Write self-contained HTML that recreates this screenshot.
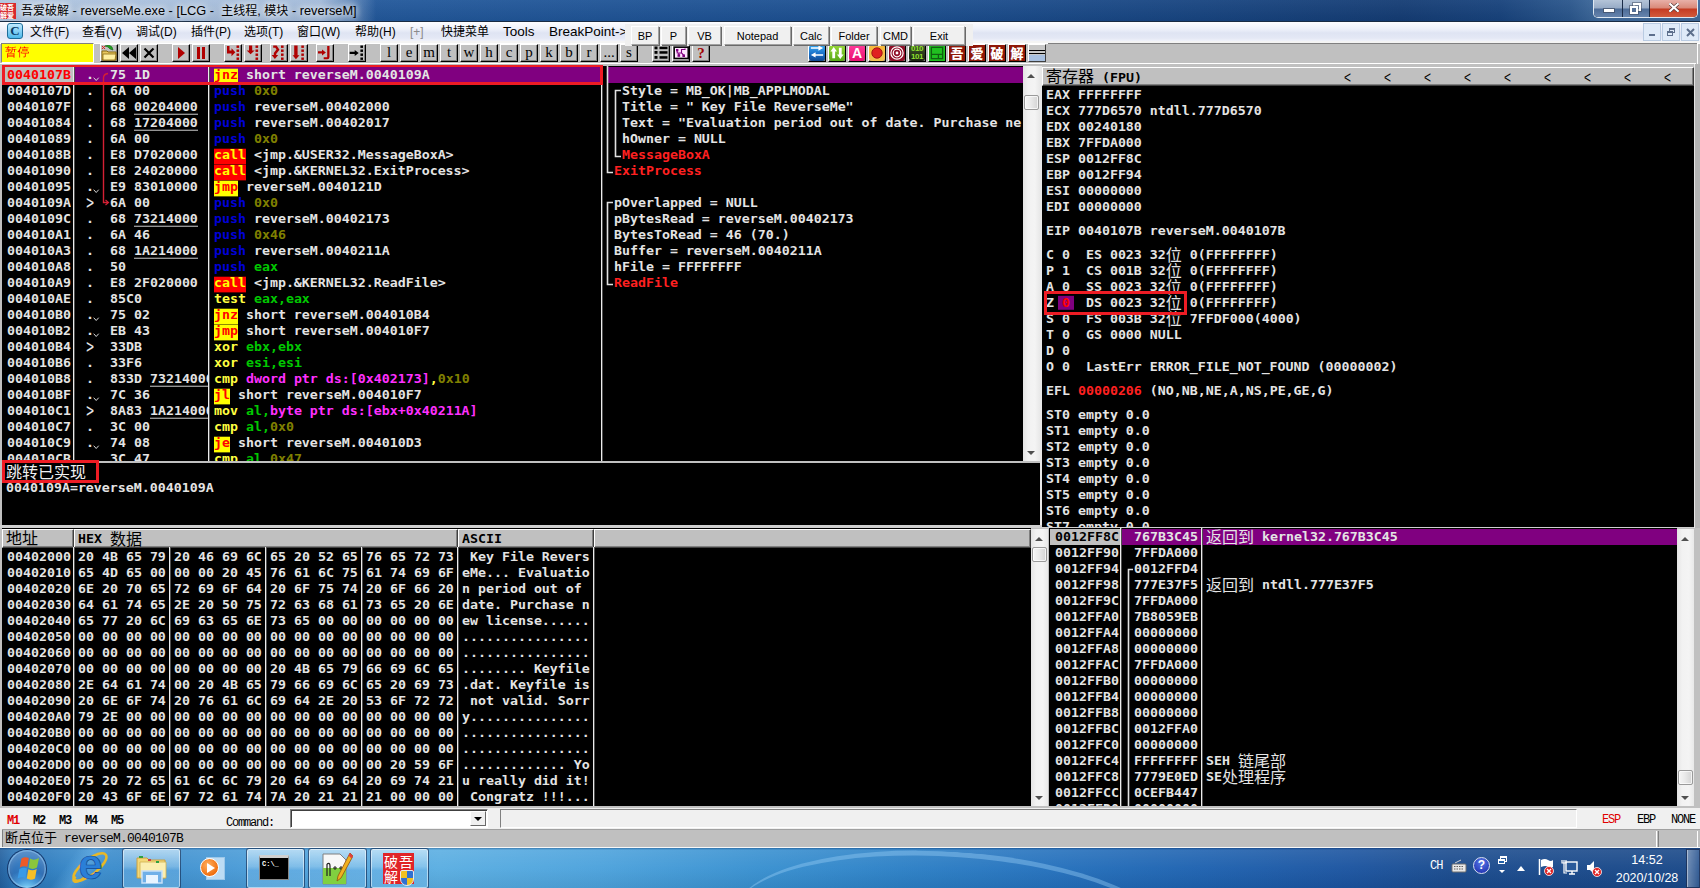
<!DOCTYPE html><html><head><meta charset="utf-8"><title>OllyDbg</title><style>
*{box-sizing:border-box;margin:0;padding:0}
html,body{width:1700px;height:888px;overflow:hidden;background:#c0c0c0}
body{position:relative;font-family:"Liberation Sans","Noto Sans CJK SC",sans-serif;font-size:13px;color:#000}
.abs{position:absolute}
.m{position:absolute;margin-top:1px;white-space:pre;font-family:"DejaVu Sans Mono","Liberation Mono","WenQuanYi Zen Hei","Noto Sans CJK SC",monospace;font-weight:bold;font-size:13.288px;line-height:18px;height:16px;color:#e4e4e4;letter-spacing:0;transform:scaleY(.87);transform-origin:0 6.500px}
.m i{font-style:normal}
.cj{font-family:"Noto Sans CJK SC","WenQuanYi Zen Hei",sans-serif;font-weight:normal;font-size:16px;letter-spacing:0}
.m .cj{position:relative;top:-1.500px;display:inline-block;height:16px;line-height:16px;vertical-align:top;transform:scaleY(1.150);transform-origin:0 6.500px}
.m.cj{transform:none;line-height:13px}
.pane{position:absolute;background:#000;overflow:hidden}
.pu{color:#0000d8}.ol{color:#808000}.gr{color:#00c800}.ye{color:#ffff40}.mg{color:#ff30ff}.rd{color:#ff2020}
.cl{color:#ffff00;background:#ff0000;padding:.200px 0 2.800px}.jp{color:#ff0000;background:#ffff00;padding:.200px 0 2.800px}
.u{border-bottom:1px solid #e8e8e8}
.vl{position:absolute;width:1px;background:#d8d8d8}
.tb{position:absolute;top:44px;width:18px;height:18px;background:#c0c0c0;border:1px solid;border-color:#fff #000 #000 #fff;box-shadow:inset -1px -1px 0 #808080}
.tbl{font-family:"Liberation Serif",serif;font-size:15px;line-height:15px;text-align:center;color:#000}
.fb{position:absolute;z-index:6;top:26px;height:19px;background:#f0f0f0;border:1px solid;border-color:#fff #a0a0a0 #a0a0a0 #fff;box-shadow:1px 1px 0 #696969;font-size:11px;line-height:18px;text-align:center;color:#000}
.mi{position:absolute;top:23px;height:18px;line-height:18px;font-size:12px;color:#000;white-space:pre}
.sb{position:absolute;background:linear-gradient(90deg,#e4e4e4 0,#f2f2f2 30%,#f4f4f4 70%,#e8e8e8 100%)}
.sbb{position:absolute;background:linear-gradient(90deg,#f6f6f6 0,#eaeaea 45%,#d4d4d4 100%);border:1px solid #9a9a9a;border-radius:2px;box-shadow:inset 0 0 0 1px rgba(255,255,255,.7)}
.hd{position:absolute;background:#c0c0c0;height:18px;border:1px solid;border-color:#fff #404040 #404040 #fff;box-shadow:inset -1px -1px 0 #808080}
</style></head><body>
<div class="abs" style="left:0;top:0;width:1700px;height:22px;background:linear-gradient(90deg,#275c9d 0,#21579a 420px,#1c4f90 900px,#174480 1200px,#143c74 1400px,#17427c 1500px,#2a568c 1570px,#3f6a9c 1600px);border-bottom:1px solid #1a2c44"></div>
<div class="abs" style="left:0;top:0;width:400px;height:21px;background:linear-gradient(90deg,rgba(190,208,230,.9) 0,rgba(180,200,226,.88) 320px,rgba(170,192,222,.5) 350px,rgba(170,192,222,0) 376px)"></div>
<div class="abs" style="left:0;top:0;width:1700px;height:21px;background:linear-gradient(180deg,rgba(255,255,255,.05),rgba(0,0,0,.05))"></div>
<div class="abs" style="left:0;top:3px;width:16px;height:16px;background:#d8282c;color:#fff;font-size:7px;line-height:8px;font-weight:bold;overflow:hidden;letter-spacing:0;font-family:'Noto Sans CJK SC',sans-serif">破吾<br>解爱</div>
<div class="abs" style="left:21px;top:1px;height:20px;line-height:20px;font-size:12.800px;color:#000;white-space:pre;text-shadow:0 0 6px #fff,0 0 8px #fff"><span style="font-size:12px">吾爱破解</span> - reverseMe.exe - [LCG -  <span style="font-size:12px">主线程</span>, <span style="font-size:12px">模块</span> - reverseM]</div>
<div class="abs" style="left:1593px;top:0;width:105px;height:18px;border:1px solid #dfe8f2;border-top:none;border-radius:0 0 5px 5px;background:#1b2c48"></div>
<div class="abs" style="left:1594px;top:0;width:28px;height:17px;border-radius:0 0 0 4px;background:linear-gradient(180deg,#b4c4d8 0,#97abc6 48%,#4d6c97 52%,#6684ad 100%)"><div class="abs" style="left:10px;top:9px;width:10px;height:3px;background:#fff;box-shadow:0 0 0 1px rgba(60,70,90,.6)"></div></div>
<div class="abs" style="left:1623px;top:0;width:26px;height:17px;background:linear-gradient(180deg,#b4c4d8 0,#97abc6 48%,#4d6c97 52%,#6684ad 100%)"><div class="abs" style="left:10px;top:3px;width:8px;height:8px;border:2px solid #fff;box-shadow:0 0 0 1px rgba(60,70,90,.5)"></div><div class="abs" style="left:7px;top:6px;width:8px;height:8px;border:2px solid #fff;background:#546f96;box-shadow:0 0 0 1px rgba(60,70,90,.5)"></div></div>
<div class="abs" style="left:1650px;top:0;width:47px;height:17px;border-radius:0 0 4px 0;background:linear-gradient(180deg,#e8b0a8 0,#d98878 48%,#c43a22 52%,#d25a3c 100%)"><svg class="abs" style="left:19px;top:3px" width="10" height="9" viewBox="0 0 13 11"><path d="M1.5 1 L11.5 10 M11.5 1 L1.5 10" stroke="#4a3030" stroke-width="4.4" stroke-linecap="square"/><path d="M1.5 1 L11.5 10 M11.5 1 L1.5 10" stroke="#fff" stroke-width="2.8" stroke-linecap="square"/></svg></div>
<div class="abs" style="left:0;top:22px;width:1700px;height:20px;background:linear-gradient(180deg,#fdfdff 0,#eef1fa 35%,#dfe4f3 55%,#e4e8f5 80%,#f4f6fc 100%)"></div>
<div class="abs" style="left:0;top:41px;width:1700px;height:2px;background:#f4f4f4"></div>
<div class="abs" style="left:7px;top:23px;width:16px;height:16px;border-radius:3px;border:1px solid #1c6c98;background:linear-gradient(180deg,#bfeaff,#4cb8ea);color:#0a3c66;font-family:'Liberation Serif',serif;font-weight:bold;font-size:13px;line-height:14px;text-align:center">C</div>
<div class="mi" style="left:30px">文件(F)</div>
<div class="mi" style="left:82px">查看(V)</div>
<div class="mi" style="left:136px">调试(D)</div>
<div class="mi" style="left:191px">插件(P)</div>
<div class="mi" style="left:244px">选项(T)</div>
<div class="mi" style="left:297px">窗口(W)</div>
<div class="mi" style="left:355px">帮助(H)</div>
<div class="mi" style="left:410px;color:#8a8a8a">[+]</div>
<div class="mi" style="left:441px">快捷菜单</div>
<div class="mi" style="left:503px;font-size:13.5px">Tools</div>
<div class="mi" style="left:549px;font-size:13.5px">BreakPoint-&gt;</div>
<div class="abs" style="left:1643px;top:23px;width:18px;height:18px;background:#dfeaf8;border:1px solid #b9cbe2"><div class="abs" style="left:5px;top:10px;width:6px;height:2px;background:#5d6f8c"></div></div>
<div class="abs" style="left:1662px;top:23px;width:18px;height:18px;background:#dfeaf8;border:1px solid #b9cbe2"><div class="abs" style="left:6px;top:4px;width:6px;height:5px;border:1px solid #5d6f8c;border-top-width:2px"></div><div class="abs" style="left:4px;top:7px;width:6px;height:5px;border:1px solid #5d6f8c;border-top-width:2px;background:#dfeaf8"></div></div>
<div class="abs" style="left:1681px;top:23px;width:18px;height:18px;background:#dfeaf8;border:1px solid #b9cbe2"><svg class="abs" style="left:4px;top:4px" width="9" height="9" viewBox="0 0 9 9"><path d="M1 1L8 8M8 1L1 8" stroke="#5d6f8c" stroke-width="2"/></svg></div>
<div class="abs" style="left:625px;top:24px;width:348px;height:22px;background:#f0f0f0;z-index:5"></div>
<div class="fb" style="left:631px;width:28px">BP</div>
<div class="fb" style="left:661px;width:25px">P</div>
<div class="fb" style="left:688px;width:33px">VB</div>
<div class="fb" style="left:724px;width:67px">Notepad</div>
<div class="fb" style="left:793px;width:36px">Calc</div>
<div class="fb" style="left:831px;width:46px">Folder</div>
<div class="fb" style="left:880px;width:31px">CMD</div>
<div class="fb" style="left:913px;width:52px">Exit</div>
<div class="abs" style="left:0;top:43px;width:1700px;height:22px;background:#c0c0c0;border-top:1px solid #fff"></div>
<div class="abs" style="left:0;top:63px;width:1696px;height:1px;background:#fff"></div>
<div class="abs" style="left:1697px;top:43px;width:1px;height:21px;background:#fff"></div>
<div class="abs" style="left:1048px;top:43px;width:649px;height:1px;background:#808080"></div>
<div class="abs" style="left:1px;top:43px;width:93px;height:20px;background:#ffff00;border:1px solid;border-color:#808080 #fff #fff #808080;color:#ff0000;font-family:'WenQuanYi Zen Hei','Noto Sans CJK SC',sans-serif;font-size:12px;line-height:17px;padding-left:3px;letter-spacing:.5px">暂停</div>
<div class="tb " style="left:100px"><svg width="16" height="16" viewBox="0 0 16 16" style="position:absolute;left:0;top:0"><path d="M1 6h5l1 1h8v8H1z" fill="#e8c860" stroke="#8a6a10" stroke-width="1"/><path d="M2 9h13l-1 6H2z" fill="#fff0a0" stroke="#8a6a10" stroke-width=".8"/><path d="M4 1c2-1 5-1 7 1l1 3-3-1-2-2z" fill="#20a020" stroke="#106010" stroke-width=".6"/><path d="M1 1l3 3M4 1L1 4" stroke="#e02020" stroke-width="1"/></svg></div>
<div class="tb " style="left:120px"><svg width="16" height="16" viewBox="0 0 16 16" style="position:absolute;left:0;top:0"><path d="M8 2v12L1 8zM15 2v12L8 8z" fill="#000"/></svg></div>
<div class="tb " style="left:140px"><svg width="16" height="16" viewBox="0 0 16 16" style="position:absolute;left:0;top:0"><path d="M3.5 3.5l9 9M12.5 3.5l-9 9" stroke="#000" stroke-width="2.2"/></svg></div>
<div class="tb " style="left:172px"><svg width="16" height="16" viewBox="0 0 16 16" style="position:absolute;left:0;top:0"><path d="M5 2l7 6-7 6z" fill="#b00000"/></svg></div>
<div class="tb " style="left:192px"><svg width="16" height="16" viewBox="0 0 16 16" style="position:absolute;left:0;top:0"><path d="M4 2h3v12H4zM9 2h3v12H9z" fill="#b00000"/></svg></div>
<div class="tb " style="left:224px"><svg width="16" height="16" viewBox="0 0 16 16" style="position:absolute;left:0;top:0"><path d="M2 1h2.500v4.500h2V3.200l3.800 4-3.800 4V8.500H2z" fill="#b00000"/><rect x="11.5" y="0.5" width="2.600" height="2.400" fill="#b00000"/><rect x="11.5" y="4.5" width="2.600" height="2.400" fill="#b00000"/><rect x="11.5" y="8.5" width="2.600" height="2.400" fill="#b00000"/><rect x="11.5" y="12.5" width="2.600" height="2.400" fill="#b00000"/></svg></div>
<div class="tb " style="left:244px"><svg width="16" height="16" viewBox="0 0 16 16" style="position:absolute;left:0;top:0"><path d="M4 .500h3.200v5h2.400L5.600 9.300 1.700 5.500H4z" fill="#b00000"/><rect x="10.5" y="0.5" width="2.600" height="2.400" fill="#b00000"/><rect x="10.5" y="4.5" width="2.600" height="2.400" fill="#b00000"/><rect x="10.5" y="8.5" width="2.600" height="2.400" fill="#b00000"/><rect x="10.5" y="12.5" width="2.600" height="2.400" fill="#b00000"/></svg></div>
<div class="tb " style="left:270px"><svg width="16" height="16" viewBox="0 0 16 16" style="position:absolute;left:0;top:0"><path d="M2.200 1.600H5L7 4.600 4 8.400V10.500" stroke="#b00000" stroke-width="2.400" fill="none"/><path d="M.600 10h6.600L3.900 14z" fill="#b00000"/><rect x="10" y="0.5" width="2.600" height="2.400" fill="#b00000"/><rect x="10" y="4.5" width="2.600" height="2.400" fill="#b00000"/><rect x="10" y="8.5" width="2.600" height="2.400" fill="#b00000"/><rect x="10" y="12.5" width="2.600" height="2.400" fill="#b00000"/></svg></div>
<div class="tb " style="left:290px"><svg width="16" height="16" viewBox="0 0 16 16" style="position:absolute;left:0;top:0"><path d="M3.200 .500h3.400v9.700h1.900L4.900 14.300 1.600 10.200h1.600z" fill="#b00000"/><rect x="10.3" y="0.5" width="2.600" height="2.400" fill="#b00000"/><rect x="10.3" y="4.5" width="2.600" height="2.400" fill="#b00000"/><rect x="10.3" y="8.5" width="2.600" height="2.400" fill="#b00000"/><rect x="10.3" y="12.5" width="2.600" height="2.400" fill="#b00000"/></svg></div>
<div class="tb " style="left:316px"><svg width="16" height="16" viewBox="0 0 16 16" style="position:absolute;left:0;top:0"><path d="M1 6.300h4V4.400l3.900 3-3.900 3V8.500H1z" fill="#b00000"/><path d="M10.200 1h2.300v11q0 2.200-2.200 2.200H6.700v-2h3q.500 0 .500-.500z" fill="#b00000"/></svg></div>
<div class="tb " style="left:348px"><svg width="16" height="16" viewBox="0 0 16 16" style="position:absolute;left:0;top:0"><path d="M.700 6.800h5V5l4 3-4 3V9H.700z" fill="#000"/><rect x="11.4" y="0.5" width="2.600" height="2.400" fill="#000"/><rect x="11.4" y="4.5" width="2.600" height="2.400" fill="#000"/><rect x="11.4" y="8.5" width="2.600" height="2.400" fill="#000"/><rect x="11.4" y="12.5" width="2.600" height="2.400" fill="#000"/></svg></div>
<div class="tb tbl" style="left:380px">l</div>
<div class="tb tbl" style="left:400px">e</div>
<div class="tb tbl" style="left:420px">m</div>
<div class="tb tbl" style="left:440px">t</div>
<div class="tb tbl" style="left:460px">w</div>
<div class="tb tbl" style="left:480px">h</div>
<div class="tb tbl" style="left:500px">c</div>
<div class="tb tbl" style="left:520px">p</div>
<div class="tb tbl" style="left:540px">k</div>
<div class="tb tbl" style="left:560px">b</div>
<div class="tb tbl" style="left:580px">r</div>
<div class="tb tbl" style="left:600px">...</div>
<div class="tb tbl" style="left:620px">s</div>
<div class="tb " style="left:652px"><svg width="16" height="16" viewBox="0 0 16 16" style="position:absolute;left:0;top:0"><rect x="1.500" y="1.5" width="3" height="2.800" fill="#000"/><rect x="6.500" y="1.7" width="8" height="2.500" fill="#000"/><rect x="1.500" y="6" width="3" height="2.800" fill="#000"/><rect x="6.500" y="6.2" width="8" height="2.500" fill="#000"/><rect x="1.500" y="11" width="3" height="2.800" fill="#000"/><rect x="6.500" y="11.2" width="8" height="2.500" fill="#000"/></svg></div>
<div class="tb " style="left:672px"><svg width="16" height="16" viewBox="0 0 16 16" style="position:absolute;left:0;top:0"><rect x="1.200" y="2.200" width="14" height="11.200" fill="#ffe6ff" stroke="#000" stroke-width="1.500"/><g fill="#800080"><rect x="3" y="4" width="2.400" height="2.400"/><rect x="4.500" y="9.200" width="2.600" height="2.600"/><rect x="9.400" y="9.400" width="2.600" height="2.600"/></g><path d="M4.200 5v3h4.300M8.500 4v4l2 2M5.800 8v2M8.500 4.500h3.500v-1" stroke="#800080" stroke-width="1.100" fill="none"/></svg></div>
<div class="tb" style="left:692px;font-family:'Liberation Serif',serif;font-weight:bold;font-size:15px;line-height:16px;text-align:center;color:#a00000">?</div>
<div class="tb" style="left:808px;background:#fff"><div class="abs" style="left:0;top:0;width:16px;height:16px;background:linear-gradient(180deg,#38a8f0,#1a70c8 55%,#104890);border-radius:3px;overflow:hidden;"><svg width="16" height="16" viewBox="0 0 17 17" style="position:absolute;left:0;top:0"><path d="M2 5h8V2.500L15 6l-5 3.500V7H2z" fill="#fff" transform="translate(0,-1.500) scale(1,.8)"/><path d="M15 11H7V8.500L2 12l5 3.500V13h8z" fill="#fff" transform="translate(0,1) scale(1,.8)"/></svg></div></div>
<div class="tb" style="left:828px;background:#fff"><div class="abs" style="left:0;top:0;width:16px;height:16px;background:linear-gradient(180deg,#98d838,#58a818);border-radius:3px;overflow:hidden;"><svg width="16" height="16" viewBox="0 0 17 17" style="position:absolute;left:0;top:0"><path d="M5 2l3.500 5H6.500v7h-3V7H1.500z" fill="#fff"/><path d="M12 15l3.500-5h-2V3h-3v7h-2z" fill="#fff"/></svg></div></div>
<div class="tb" style="left:848px;background:#fff"><div class="abs" style="left:0;top:0;width:16px;height:16px;background:linear-gradient(180deg,#ff3c98,#e81070);border-radius:3px;overflow:hidden;"><div style="color:#fff;font-weight:bold;font-size:14px;line-height:16px;text-align:center;width:16px">A</div></div></div>
<div class="tb" style="left:868px;background:#fff"><div class="abs" style="left:0;top:0;width:16px;height:16px;background:linear-gradient(180deg,#f8b838,#f0c050);border-radius:3px;overflow:hidden;"><svg width="16" height="16" viewBox="0 0 17 17" style="position:absolute;left:0;top:0"><circle cx="8.500" cy="8.500" r="5.500" fill="#e02020" stroke="#a01010" stroke-width="1"/></svg></div></div>
<div class="tb" style="left:888px;background:#fff"><div class="abs" style="left:0;top:0;width:16px;height:16px;background:#901028;border-radius:3px;overflow:hidden;"><svg width="16" height="16" viewBox="0 0 17 17" style="position:absolute;left:0;top:0"><circle cx="8.500" cy="8.500" r="6.500" fill="none" stroke="#fff" stroke-width="1.300"/><circle cx="8.500" cy="8.500" r="4" fill="none" stroke="#fff" stroke-width="1.300"/><circle cx="8.500" cy="8.500" r="1.500" fill="#fff"/></svg></div></div>
<div class="tb" style="left:908px;background:#fff"><div class="abs" style="left:0;top:0;width:16px;height:16px;background:linear-gradient(180deg,#405828,#182010);border-radius:3px;overflow:hidden;"><div style="color:#90e030;font-weight:bold;font-size:8px;line-height:8px;text-align:center;width:16px;padding-top:0px;letter-spacing:-.5px">010<br>101</div></div></div>
<div class="tb" style="left:928px;background:#fff"><div class="abs" style="left:0;top:0;width:16px;height:16px;background:#20c020;overflow:hidden;"><svg width="16" height="16" viewBox="0 0 17 17" style="position:absolute;left:0;top:0"><rect x="2.500" y="2.500" width="12" height="12" fill="none" stroke="#106010" stroke-width="1.400"/><path d="M3 10h11M10 10v4" stroke="#106010" stroke-width="1.400"/></svg></div></div>
<div class="tb" style="left:948px;background:#fff"><div class="abs" style="left:0;top:0;width:16px;height:16px;background:#901808;overflow:hidden;"><div style="color:#fff;font-family:'Noto Sans CJK SC',sans-serif;font-weight:900;font-size:13px;line-height:16px;text-align:center;width:16px">吾</div></div></div>
<div class="tb" style="left:968px;background:#fff"><div class="abs" style="left:0;top:0;width:16px;height:16px;background:#901808;overflow:hidden;"><div style="color:#fff;font-family:'Noto Sans CJK SC',sans-serif;font-weight:900;font-size:13px;line-height:16px;text-align:center;width:16px">爱</div></div></div>
<div class="tb" style="left:988px;background:#fff"><div class="abs" style="left:0;top:0;width:16px;height:16px;background:#901808;overflow:hidden;"><div style="color:#fff;font-family:'Noto Sans CJK SC',sans-serif;font-weight:900;font-size:13px;line-height:16px;text-align:center;width:16px">破</div></div></div>
<div class="tb" style="left:1008px;background:#fff"><div class="abs" style="left:0;top:0;width:16px;height:16px;background:#901808;overflow:hidden;"><div style="color:#fff;font-family:'Noto Sans CJK SC',sans-serif;font-weight:900;font-size:13px;line-height:16px;text-align:center;width:16px">解</div></div></div>
<div class="abs" style="left:1028px;top:44px;width:18px;height:18px;background:#c8c8c8;border:1px solid;border-color:#fff #404040 #404040 #fff"><div class="abs" style="left:0;top:5px;width:16px;height:1px;background:#000"></div><div class="abs" style="left:0;top:8px;width:16px;height:1px;background:#000"></div><div class="abs" style="left:0;top:10px;width:16px;height:6px;background:#a8c0e0"></div></div>
<div class="abs" style="left:0;top:64px;width:1700px;height:2px;background:#c0c0c0"></div>
<div class="pane" style="left:2px;top:66px;width:1022px;height:395px"></div>
<div class="vl" style="left:73px;top:66px;height:395px;width:2px;background:linear-gradient(90deg,#ececec 0,#ececec 1px,#505050 1px,#505050 2px)"></div>
<div class="vl" style="left:208px;top:66px;height:395px;width:2px;background:linear-gradient(90deg,#ececec 0,#ececec 1px,#505050 1px,#505050 2px)"></div>
<div class="vl" style="left:601px;top:66px;height:395px;width:2px;background:linear-gradient(90deg,#ececec 0,#ececec 1px,#505050 1px,#505050 2px)"></div>
<div class="abs" style="left:3px;top:67px;width:70px;height:16px;background:#c0c0c0"></div>
<div class="abs" style="left:75px;top:67px;width:133px;height:16px;background:#800080"></div>
<div class="abs" style="left:210px;top:67px;width:391px;height:16px;background:#800080"></div>
<div class="abs" style="left:608px;top:67px;width:415px;height:16px;background:#800080"></div>
<div class="abs" style="left:2px;top:66px;width:1022px;height:395px;overflow:hidden">
<div class="m" style="left:5px;top:0px;color:#ff0000">0040107B</div>
<div class="m" style="left:84px;top:0px">.</div>
<svg class="abs" style="left:91px;top:11px" width="7" height="5" viewBox="0 0 7 5"><path d="M.700 .700l2.500 2.800 2.500-2.800" stroke="#d8d8d8" stroke-width="1" fill="none"/></svg>
<div class="m" style="left:108px;top:0px;width:98px;clip-path:inset(-4px 0 -4px 0)">75 1D</div>
<div class="m" style="left:212px;top:0px"><i class="jp">jnz</i> short reverseM.0040109A</div>
<div class="m" style="left:5px;top:16px;color:#e4e4e4">0040107D</div>
<div class="m" style="left:84px;top:16px">.</div>
<div class="m" style="left:108px;top:16px;width:98px;clip-path:inset(-4px 0 -4px 0)">6A 00</div>
<div class="m" style="left:212px;top:16px"><i class="pu">push</i> <i class="ol">0x0</i></div>
<div class="m" style="left:5px;top:32px;color:#e4e4e4">0040107F</div>
<div class="m" style="left:84px;top:32px">.</div>
<div class="m" style="left:108px;top:32px;width:98px;clip-path:inset(-4px 0 -4px 0)">68 <i class="u">00204000</i></div>
<div class="m" style="left:212px;top:32px"><i class="pu">push</i> reverseM.00402000</div>
<div class="m" style="left:5px;top:48px;color:#e4e4e4">00401084</div>
<div class="m" style="left:84px;top:48px">.</div>
<div class="m" style="left:108px;top:48px;width:98px;clip-path:inset(-4px 0 -4px 0)">68 <i class="u">17204000</i></div>
<div class="m" style="left:212px;top:48px"><i class="pu">push</i> reverseM.00402017</div>
<div class="m" style="left:5px;top:64px;color:#e4e4e4">00401089</div>
<div class="m" style="left:84px;top:64px">.</div>
<div class="m" style="left:108px;top:64px;width:98px;clip-path:inset(-4px 0 -4px 0)">6A 00</div>
<div class="m" style="left:212px;top:64px"><i class="pu">push</i> <i class="ol">0x0</i></div>
<div class="m" style="left:5px;top:80px;color:#e4e4e4">0040108B</div>
<div class="m" style="left:84px;top:80px">.</div>
<div class="m" style="left:108px;top:80px;width:98px;clip-path:inset(-4px 0 -4px 0)">E8 D7020000</div>
<div class="m" style="left:212px;top:80px"><i class="cl">call</i> &lt;jmp.&amp;USER32.MessageBoxA&gt;</div>
<div class="m" style="left:5px;top:96px;color:#e4e4e4">00401090</div>
<div class="m" style="left:84px;top:96px">.</div>
<div class="m" style="left:108px;top:96px;width:98px;clip-path:inset(-4px 0 -4px 0)">E8 24020000</div>
<div class="m" style="left:212px;top:96px"><i class="cl">call</i> &lt;jmp.&amp;KERNEL32.ExitProcess&gt;</div>
<div class="m" style="left:5px;top:112px;color:#e4e4e4">00401095</div>
<div class="m" style="left:84px;top:112px">.</div>
<svg class="abs" style="left:91px;top:123px" width="7" height="5" viewBox="0 0 7 5"><path d="M.700 .700l2.500 2.800 2.500-2.800" stroke="#d8d8d8" stroke-width="1" fill="none"/></svg>
<div class="m" style="left:108px;top:112px;width:98px;clip-path:inset(-4px 0 -4px 0)">E9 83010000</div>
<div class="m" style="left:212px;top:112px"><i class="jp">jmp</i> reverseM.0040121D</div>
<div class="m" style="left:5px;top:128px;color:#e4e4e4">0040109A</div>
<div class="m" style="left:83px;top:128px;font-weight:normal;font-size:16px;line-height:15px;width:10px;text-align:center;transform:scale(.800,1.200);transform-origin:5px 8px">&gt;</div>
<div class="m" style="left:108px;top:128px;width:98px;clip-path:inset(-4px 0 -4px 0)">6A 00</div>
<div class="m" style="left:212px;top:128px"><i class="pu">push</i> <i class="ol">0x0</i></div>
<div class="m" style="left:5px;top:144px;color:#e4e4e4">0040109C</div>
<div class="m" style="left:84px;top:144px">.</div>
<div class="m" style="left:108px;top:144px;width:98px;clip-path:inset(-4px 0 -4px 0)">68 <i class="u">73214000</i></div>
<div class="m" style="left:212px;top:144px"><i class="pu">push</i> reverseM.00402173</div>
<div class="m" style="left:5px;top:160px;color:#e4e4e4">004010A1</div>
<div class="m" style="left:84px;top:160px">.</div>
<div class="m" style="left:108px;top:160px;width:98px;clip-path:inset(-4px 0 -4px 0)">6A 46</div>
<div class="m" style="left:212px;top:160px"><i class="pu">push</i> <i class="ol">0x46</i></div>
<div class="m" style="left:5px;top:176px;color:#e4e4e4">004010A3</div>
<div class="m" style="left:84px;top:176px">.</div>
<div class="m" style="left:108px;top:176px;width:98px;clip-path:inset(-4px 0 -4px 0)">68 <i class="u">1A214000</i></div>
<div class="m" style="left:212px;top:176px"><i class="pu">push</i> reverseM.0040211A</div>
<div class="m" style="left:5px;top:192px;color:#e4e4e4">004010A8</div>
<div class="m" style="left:84px;top:192px">.</div>
<div class="m" style="left:108px;top:192px;width:98px;clip-path:inset(-4px 0 -4px 0)">50</div>
<div class="m" style="left:212px;top:192px"><i class="pu">push</i> <i class="gr">eax</i></div>
<div class="m" style="left:5px;top:208px;color:#e4e4e4">004010A9</div>
<div class="m" style="left:84px;top:208px">.</div>
<div class="m" style="left:108px;top:208px;width:98px;clip-path:inset(-4px 0 -4px 0)">E8 2F020000</div>
<div class="m" style="left:212px;top:208px"><i class="cl">call</i> &lt;jmp.&amp;KERNEL32.ReadFile&gt;</div>
<div class="m" style="left:5px;top:224px;color:#e4e4e4">004010AE</div>
<div class="m" style="left:84px;top:224px">.</div>
<div class="m" style="left:108px;top:224px;width:98px;clip-path:inset(-4px 0 -4px 0)">85C0</div>
<div class="m" style="left:212px;top:224px"><i class="ye">test</i> <i class="gr">eax,eax</i></div>
<div class="m" style="left:5px;top:240px;color:#e4e4e4">004010B0</div>
<div class="m" style="left:84px;top:240px">.</div>
<svg class="abs" style="left:91px;top:251px" width="7" height="5" viewBox="0 0 7 5"><path d="M.700 .700l2.500 2.800 2.500-2.800" stroke="#d8d8d8" stroke-width="1" fill="none"/></svg>
<div class="m" style="left:108px;top:240px;width:98px;clip-path:inset(-4px 0 -4px 0)">75 02</div>
<div class="m" style="left:212px;top:240px"><i class="jp">jnz</i> short reverseM.004010B4</div>
<div class="m" style="left:5px;top:256px;color:#e4e4e4">004010B2</div>
<div class="m" style="left:84px;top:256px">.</div>
<svg class="abs" style="left:91px;top:267px" width="7" height="5" viewBox="0 0 7 5"><path d="M.700 .700l2.500 2.800 2.500-2.800" stroke="#d8d8d8" stroke-width="1" fill="none"/></svg>
<div class="m" style="left:108px;top:256px;width:98px;clip-path:inset(-4px 0 -4px 0)">EB 43</div>
<div class="m" style="left:212px;top:256px"><i class="jp">jmp</i> short reverseM.004010F7</div>
<div class="m" style="left:5px;top:272px;color:#e4e4e4">004010B4</div>
<div class="m" style="left:83px;top:272px;font-weight:normal;font-size:16px;line-height:15px;width:10px;text-align:center;transform:scale(.800,1.200);transform-origin:5px 8px">&gt;</div>
<div class="m" style="left:108px;top:272px;width:98px;clip-path:inset(-4px 0 -4px 0)">33DB</div>
<div class="m" style="left:212px;top:272px"><i class="ye">xor</i> <i class="gr">ebx,ebx</i></div>
<div class="m" style="left:5px;top:288px;color:#e4e4e4">004010B6</div>
<div class="m" style="left:84px;top:288px">.</div>
<div class="m" style="left:108px;top:288px;width:98px;clip-path:inset(-4px 0 -4px 0)">33F6</div>
<div class="m" style="left:212px;top:288px"><i class="ye">xor</i> <i class="gr">esi,esi</i></div>
<div class="m" style="left:5px;top:304px;color:#e4e4e4">004010B8</div>
<div class="m" style="left:84px;top:304px">.</div>
<div class="m" style="left:108px;top:304px;width:98px;clip-path:inset(-4px 0 -4px 0)">833D <i class="u">73214000</i></div>
<div class="m" style="left:212px;top:304px"><i class="ye">cmp</i> <i class="mg">dword ptr ds:[0x402173]</i><i class="ye">,</i><i class="ol">0x10</i></div>
<div class="m" style="left:5px;top:320px;color:#e4e4e4">004010BF</div>
<div class="m" style="left:84px;top:320px">.</div>
<svg class="abs" style="left:91px;top:331px" width="7" height="5" viewBox="0 0 7 5"><path d="M.700 .700l2.500 2.800 2.500-2.800" stroke="#d8d8d8" stroke-width="1" fill="none"/></svg>
<div class="m" style="left:108px;top:320px;width:98px;clip-path:inset(-4px 0 -4px 0)">7C 36</div>
<div class="m" style="left:212px;top:320px"><i class="jp">jl</i> short reverseM.004010F7</div>
<div class="m" style="left:5px;top:336px;color:#e4e4e4">004010C1</div>
<div class="m" style="left:83px;top:336px;font-weight:normal;font-size:16px;line-height:15px;width:10px;text-align:center;transform:scale(.800,1.200);transform-origin:5px 8px">&gt;</div>
<div class="m" style="left:108px;top:336px;width:98px;clip-path:inset(-4px 0 -4px 0)">8A83 <i class="u">1A214000</i></div>
<div class="m" style="left:212px;top:336px"><i class="ye">mov</i> <i class="gr">al,</i><i class="mg">byte ptr ds:[ebx+0x40211A]</i></div>
<div class="m" style="left:5px;top:352px;color:#e4e4e4">004010C7</div>
<div class="m" style="left:84px;top:352px">.</div>
<div class="m" style="left:108px;top:352px;width:98px;clip-path:inset(-4px 0 -4px 0)">3C 00</div>
<div class="m" style="left:212px;top:352px"><i class="ye">cmp</i> <i class="gr">al,</i><i class="ol">0x0</i></div>
<div class="m" style="left:5px;top:368px;color:#e4e4e4">004010C9</div>
<div class="m" style="left:84px;top:368px">.</div>
<svg class="abs" style="left:91px;top:379px" width="7" height="5" viewBox="0 0 7 5"><path d="M.700 .700l2.500 2.800 2.500-2.800" stroke="#d8d8d8" stroke-width="1" fill="none"/></svg>
<div class="m" style="left:108px;top:368px;width:98px;clip-path:inset(-4px 0 -4px 0)">74 08</div>
<div class="m" style="left:212px;top:368px"><i class="jp">je</i> short reverseM.004010D3</div>
<div class="m" style="left:5px;top:384px;color:#e4e4e4">004010CB</div>
<div class="m" style="left:84px;top:384px">.</div>
<div class="m" style="left:108px;top:384px;width:98px;clip-path:inset(-4px 0 -4px 0)">3C 47</div>
<div class="m" style="left:212px;top:384px"><i class="ye">cmp</i> <i class="gr">al,</i><i class="ol">0x47</i></div>
</div>
<div class="abs" style="left:603px;top:66px;width:421px;height:395px;overflow:hidden">
<div class="m" style="left:19px;top:16px">Style = MB_OK|MB_APPLMODAL</div>
<div class="m" style="left:19px;top:32px">Title = " Key File ReverseMe"</div>
<div class="m" style="left:19px;top:48px">Text = "Evaluation period out of date. Purchase ne</div>
<div class="m" style="left:19px;top:64px">hOwner = NULL</div>
<div class="m rd" style="left:19px;top:80px">MessageBoxA</div>
<div class="m rd" style="left:11px;top:96px">ExitProcess</div>
<div class="m" style="left:11px;top:128px">pOverlapped = NULL</div>
<div class="m" style="left:11px;top:144px">pBytesRead = reverseM.00402173</div>
<div class="m" style="left:11px;top:160px">BytesToRead = 46 (70.)</div>
<div class="m" style="left:11px;top:176px">Buffer = reverseM.0040211A</div>
<div class="m" style="left:11px;top:192px">hFile = FFFFFFFF</div>
<div class="m rd" style="left:11px;top:208px">ReadFile</div>
<svg class="abs" style="left:0;top:0" width="30" height="395" viewBox="0 0 30 395"><g stroke="#e0e0e0" stroke-width="1.600" fill="none"><path d="M4.500 0V106.500H10"/><path d="M18 24.500H12.500V90.500H18"/><path d="M10 136.500H4.500V218.500H10"/></g></svg>
</div>
<svg class="abs" style="left:98px;top:66px" width="14" height="150" viewBox="0 0 14 150"><path d="M10 7.500Q5.500 8 5.500 12V136.500H10" stroke="#d42034" stroke-width="1.400" fill="none"/><path d="M7.500 134l3 2.500-3 2.500" stroke="#d42034" stroke-width="1.200" fill="none"/></svg>
<div class="abs" style="left:2px;top:65px;width:601px;height:20px;border:3px solid #ee1c24;border-top-width:2px"></div>
<div class="sb" style="left:1023px;top:66px;width:17px;height:395px"></div>
<div class="abs" style="left:1027px;top:74px;width:0;height:0;border-left:4px solid transparent;border-right:4px solid transparent;border-bottom:4px solid #505050"></div>
<div class="abs" style="left:1027px;top:451px;width:0;height:0;border-left:4px solid transparent;border-right:4px solid transparent;border-top:4px solid #505050"></div>
<div class="sbb" style="left:1024px;top:95px;width:15px;height:15px"></div>
<div class="abs" style="left:2px;top:461px;width:1039px;height:2px;background:#c0c0c0"></div>
<div class="pane" style="left:2px;top:463px;width:1038px;height:62px"></div>
<div class="m cj" style="left:6px;top:464px;color:#f0f0f0;font-size:16px;line-height:13px">跳转已实现</div>
<div class="m" style="left:6px;top:479px">0040109A=reverseM.0040109A</div>
<div class="abs" style="left:2px;top:460px;width:97px;height:23px;border:3px solid #ee1c24"></div>
<div class="abs" style="left:0;top:66px;width:2px;height:740px;background:#c0c0c0"></div>
<div class="abs" style="left:1040px;top:66px;width:2px;height:462px;background:#e8e8e8"></div>
<div class="abs" style="left:0;top:525px;width:1700px;height:3px;background:#d0d0d0"></div>
<div class="pane" style="left:2px;top:528px;width:1029px;height:278px"></div>
<div class="hd" style="left:2px;top:529px;width:72px;height:19px"><div class="m cj" style="left:3px;top:0;color:#000">地址</div></div>
<div class="hd" style="left:74px;top:529px;width:384px;height:19px"><div class="m" style="left:3px;top:0;color:#000">HEX <i class="cj">数据</i></div></div>
<div class="hd" style="left:458px;top:529px;width:136px;height:19px"><div class="m" style="left:3px;top:0;color:#000">ASCII</div></div>
<div class="hd" style="left:594px;top:529px;width:437px;height:19px"></div>
<div class="m" style="left:7px;top:548px">00402000</div>
<div class="m" style="left:78px;top:548px">20 4B 65 79</div>
<div class="m" style="left:174px;top:548px">20 46 69 6C</div>
<div class="m" style="left:270px;top:548px">65 20 52 65</div>
<div class="m" style="left:366px;top:548px">76 65 72 73</div>
<div class="m" style="left:462px;top:548px"> Key File Revers</div>
<div class="m" style="left:7px;top:564px">00402010</div>
<div class="m" style="left:78px;top:564px">65 4D 65 00</div>
<div class="m" style="left:174px;top:564px">00 00 20 45</div>
<div class="m" style="left:270px;top:564px">76 61 6C 75</div>
<div class="m" style="left:366px;top:564px">61 74 69 6F</div>
<div class="m" style="left:462px;top:564px">eMe... Evaluatio</div>
<div class="m" style="left:7px;top:580px">00402020</div>
<div class="m" style="left:78px;top:580px">6E 20 70 65</div>
<div class="m" style="left:174px;top:580px">72 69 6F 64</div>
<div class="m" style="left:270px;top:580px">20 6F 75 74</div>
<div class="m" style="left:366px;top:580px">20 6F 66 20</div>
<div class="m" style="left:462px;top:580px">n period out of </div>
<div class="m" style="left:7px;top:596px">00402030</div>
<div class="m" style="left:78px;top:596px">64 61 74 65</div>
<div class="m" style="left:174px;top:596px">2E 20 50 75</div>
<div class="m" style="left:270px;top:596px">72 63 68 61</div>
<div class="m" style="left:366px;top:596px">73 65 20 6E</div>
<div class="m" style="left:462px;top:596px">date. Purchase n</div>
<div class="m" style="left:7px;top:612px">00402040</div>
<div class="m" style="left:78px;top:612px">65 77 20 6C</div>
<div class="m" style="left:174px;top:612px">69 63 65 6E</div>
<div class="m" style="left:270px;top:612px">73 65 00 00</div>
<div class="m" style="left:366px;top:612px">00 00 00 00</div>
<div class="m" style="left:462px;top:612px">ew license......</div>
<div class="m" style="left:7px;top:628px">00402050</div>
<div class="m" style="left:78px;top:628px">00 00 00 00</div>
<div class="m" style="left:174px;top:628px">00 00 00 00</div>
<div class="m" style="left:270px;top:628px">00 00 00 00</div>
<div class="m" style="left:366px;top:628px">00 00 00 00</div>
<div class="m" style="left:462px;top:628px">................</div>
<div class="m" style="left:7px;top:644px">00402060</div>
<div class="m" style="left:78px;top:644px">00 00 00 00</div>
<div class="m" style="left:174px;top:644px">00 00 00 00</div>
<div class="m" style="left:270px;top:644px">00 00 00 00</div>
<div class="m" style="left:366px;top:644px">00 00 00 00</div>
<div class="m" style="left:462px;top:644px">................</div>
<div class="m" style="left:7px;top:660px">00402070</div>
<div class="m" style="left:78px;top:660px">00 00 00 00</div>
<div class="m" style="left:174px;top:660px">00 00 00 00</div>
<div class="m" style="left:270px;top:660px">20 4B 65 79</div>
<div class="m" style="left:366px;top:660px">66 69 6C 65</div>
<div class="m" style="left:462px;top:660px">........ Keyfile</div>
<div class="m" style="left:7px;top:676px">00402080</div>
<div class="m" style="left:78px;top:676px">2E 64 61 74</div>
<div class="m" style="left:174px;top:676px">00 20 4B 65</div>
<div class="m" style="left:270px;top:676px">79 66 69 6C</div>
<div class="m" style="left:366px;top:676px">65 20 69 73</div>
<div class="m" style="left:462px;top:676px">.dat. Keyfile is</div>
<div class="m" style="left:7px;top:692px">00402090</div>
<div class="m" style="left:78px;top:692px">20 6E 6F 74</div>
<div class="m" style="left:174px;top:692px">20 76 61 6C</div>
<div class="m" style="left:270px;top:692px">69 64 2E 20</div>
<div class="m" style="left:366px;top:692px">53 6F 72 72</div>
<div class="m" style="left:462px;top:692px"> not valid. Sorr</div>
<div class="m" style="left:7px;top:708px">004020A0</div>
<div class="m" style="left:78px;top:708px">79 2E 00 00</div>
<div class="m" style="left:174px;top:708px">00 00 00 00</div>
<div class="m" style="left:270px;top:708px">00 00 00 00</div>
<div class="m" style="left:366px;top:708px">00 00 00 00</div>
<div class="m" style="left:462px;top:708px">y...............</div>
<div class="m" style="left:7px;top:724px">004020B0</div>
<div class="m" style="left:78px;top:724px">00 00 00 00</div>
<div class="m" style="left:174px;top:724px">00 00 00 00</div>
<div class="m" style="left:270px;top:724px">00 00 00 00</div>
<div class="m" style="left:366px;top:724px">00 00 00 00</div>
<div class="m" style="left:462px;top:724px">................</div>
<div class="m" style="left:7px;top:740px">004020C0</div>
<div class="m" style="left:78px;top:740px">00 00 00 00</div>
<div class="m" style="left:174px;top:740px">00 00 00 00</div>
<div class="m" style="left:270px;top:740px">00 00 00 00</div>
<div class="m" style="left:366px;top:740px">00 00 00 00</div>
<div class="m" style="left:462px;top:740px">................</div>
<div class="m" style="left:7px;top:756px">004020D0</div>
<div class="m" style="left:78px;top:756px">00 00 00 00</div>
<div class="m" style="left:174px;top:756px">00 00 00 00</div>
<div class="m" style="left:270px;top:756px">00 00 00 00</div>
<div class="m" style="left:366px;top:756px">00 20 59 6F</div>
<div class="m" style="left:462px;top:756px">............. Yo</div>
<div class="m" style="left:7px;top:772px">004020E0</div>
<div class="m" style="left:78px;top:772px">75 20 72 65</div>
<div class="m" style="left:174px;top:772px">61 6C 6C 79</div>
<div class="m" style="left:270px;top:772px">20 64 69 64</div>
<div class="m" style="left:366px;top:772px">20 69 74 21</div>
<div class="m" style="left:462px;top:772px">u really did it!</div>
<div class="m" style="left:7px;top:788px">004020F0</div>
<div class="m" style="left:78px;top:788px">20 43 6F 6E</div>
<div class="m" style="left:174px;top:788px">67 72 61 74</div>
<div class="m" style="left:270px;top:788px">7A 20 21 21</div>
<div class="m" style="left:366px;top:788px">21 00 00 00</div>
<div class="m" style="left:462px;top:788px"> Congratz !!!...</div>
<div class="vl" style="left:73px;top:547px;height:259px;width:2px;background:linear-gradient(90deg,#ececec 0,#ececec 1px,#505050 1px,#505050 2px)"></div>
<div class="vl" style="left:169px;top:547px;height:259px;width:2px;background:linear-gradient(90deg,#ececec 0,#ececec 1px,#505050 1px,#505050 2px)"></div>
<div class="vl" style="left:265px;top:547px;height:259px;width:2px;background:linear-gradient(90deg,#ececec 0,#ececec 1px,#505050 1px,#505050 2px)"></div>
<div class="vl" style="left:361px;top:547px;height:259px;width:2px;background:linear-gradient(90deg,#ececec 0,#ececec 1px,#505050 1px,#505050 2px)"></div>
<div class="vl" style="left:457px;top:547px;height:259px;width:2px;background:linear-gradient(90deg,#ececec 0,#ececec 1px,#505050 1px,#505050 2px)"></div>
<div class="vl" style="left:593px;top:547px;height:259px;width:2px;background:linear-gradient(90deg,#ececec 0,#ececec 1px,#505050 1px,#505050 2px)"></div>
<div class="sb" style="left:1031px;top:529px;width:17px;height:277px"></div>
<div class="abs" style="left:1035px;top:537px;width:0;height:0;border-left:4px solid transparent;border-right:4px solid transparent;border-bottom:4px solid #505050"></div>
<div class="abs" style="left:1035px;top:796px;width:0;height:0;border-left:4px solid transparent;border-right:4px solid transparent;border-top:4px solid #505050"></div>
<div class="sbb" style="left:1032px;top:547px;width:15px;height:15px"></div>
<div class="pane" style="left:1042px;top:67px;width:652px;height:460px"></div>
<div class="abs" style="left:1694px;top:64px;width:6px;height:744px;background:#b4b4b4;border-left:1.500px solid #e4e4e4"></div>
<div class="hd" style="left:1042px;top:67px;width:652px;height:19px"><div class="m" style="left:3px;top:1px;color:#000"><i class="cj" style="top:-3px">寄存器</i> (FPU)</div><div class="m" style="left:301px;top:-1px;color:#000;font-weight:normal;font-family:'Liberation Sans',sans-serif;font-size:12px;transform:scaleY(1.450);transform-origin:0 8px">&lt;</div><div class="m" style="left:341px;top:-1px;color:#000;font-weight:normal;font-family:'Liberation Sans',sans-serif;font-size:12px;transform:scaleY(1.450);transform-origin:0 8px">&lt;</div><div class="m" style="left:381px;top:-1px;color:#000;font-weight:normal;font-family:'Liberation Sans',sans-serif;font-size:12px;transform:scaleY(1.450);transform-origin:0 8px">&lt;</div><div class="m" style="left:421px;top:-1px;color:#000;font-weight:normal;font-family:'Liberation Sans',sans-serif;font-size:12px;transform:scaleY(1.450);transform-origin:0 8px">&lt;</div><div class="m" style="left:461px;top:-1px;color:#000;font-weight:normal;font-family:'Liberation Sans',sans-serif;font-size:12px;transform:scaleY(1.450);transform-origin:0 8px">&lt;</div><div class="m" style="left:501px;top:-1px;color:#000;font-weight:normal;font-family:'Liberation Sans',sans-serif;font-size:12px;transform:scaleY(1.450);transform-origin:0 8px">&lt;</div><div class="m" style="left:541px;top:-1px;color:#000;font-weight:normal;font-family:'Liberation Sans',sans-serif;font-size:12px;transform:scaleY(1.450);transform-origin:0 8px">&lt;</div><div class="m" style="left:581px;top:-1px;color:#000;font-weight:normal;font-family:'Liberation Sans',sans-serif;font-size:12px;transform:scaleY(1.450);transform-origin:0 8px">&lt;</div><div class="m" style="left:621px;top:-1px;color:#000;font-weight:normal;font-family:'Liberation Sans',sans-serif;font-size:12px;transform:scaleY(1.450);transform-origin:0 8px">&lt;</div></div>
<div class="abs" style="left:1042px;top:67px;width:652px;height:460px;overflow:hidden">
<div class="m" style="left:4px;top:19px">EAX FFFFFFFF</div>
<div class="m" style="left:4px;top:35px">ECX 777D6570 ntdll.777D6570</div>
<div class="m" style="left:4px;top:51px">EDX 00240180</div>
<div class="m" style="left:4px;top:67px">EBX 7FFDA000</div>
<div class="m" style="left:4px;top:83px">ESP 0012FF8C</div>
<div class="m" style="left:4px;top:99px">EBP 0012FF94</div>
<div class="m" style="left:4px;top:115px">ESI 00000000</div>
<div class="m" style="left:4px;top:131px">EDI 00000000</div>
<div class="m" style="left:4px;top:155px">EIP 0040107B reverseM.0040107B</div>
<div class="m" style="left:4px;top:179px">C 0  ES 0023 32<i class="cj" style="display:inline-block;width:16px;height:16px;line-height:16px;vertical-align:top">位</i> 0(FFFFFFFF)</div>
<div class="m" style="left:4px;top:195px">P 1  CS 001B 32<i class="cj" style="display:inline-block;width:16px;height:16px;line-height:16px;vertical-align:top">位</i> 0(FFFFFFFF)</div>
<div class="m" style="left:4px;top:211px">A 0  SS 0023 32<i class="cj" style="display:inline-block;width:16px;height:16px;line-height:16px;vertical-align:top">位</i> 0(FFFFFFFF)</div>
<div class="m" style="left:4px;top:227px">Z <i style="background:#800080;color:#ff0000;display:inline-block;height:16px;width:16px;margin:0 -4px;padding-left:4px">0</i>  DS 0023 32<i class="cj" style="display:inline-block;width:16px;height:16px;line-height:16px;vertical-align:top">位</i> 0(FFFFFFFF)</div>
<div class="m" style="left:4px;top:243px">S 0  FS 003B 32<i class="cj" style="display:inline-block;width:16px;height:16px;line-height:16px;vertical-align:top">位</i> 7FFDF000(4000)</div>
<div class="m" style="left:4px;top:259px">T 0  GS 0000 NULL</div>
<div class="m" style="left:4px;top:275px">D 0</div>
<div class="m" style="left:4px;top:291px">O 0  LastErr ERROR_FILE_NOT_FOUND (00000002)</div>
<div class="m" style="left:4px;top:315px">EFL <i class="rd">00000206</i> (NO,NB,NE,A,NS,PE,GE,G)</div>
<div class="m" style="left:4px;top:339px">ST0 empty 0.0</div>
<div class="m" style="left:4px;top:355px">ST1 empty 0.0</div>
<div class="m" style="left:4px;top:371px">ST2 empty 0.0</div>
<div class="m" style="left:4px;top:387px">ST3 empty 0.0</div>
<div class="m" style="left:4px;top:403px">ST4 empty 0.0</div>
<div class="m" style="left:4px;top:419px">ST5 empty 0.0</div>
<div class="m" style="left:4px;top:435px">ST6 empty 0.0</div>
<div class="m" style="left:4px;top:451px">ST7 empty 0.0</div>
</div>
<div class="abs" style="left:1044px;top:291px;width:143px;height:24px;border:3px solid #ee1c24"></div>
<div class="pane" style="left:1049px;top:528px;width:628px;height:278px"></div>
<div class="abs" style="left:1050px;top:529px;width:70px;height:16px;background:#c0c0c0"></div>
<div class="abs" style="left:1122px;top:529px;width:555px;height:16px;background:#800080"></div>
<div class="abs" style="left:1049px;top:528px;width:628px;height:278px;overflow:hidden">
<div class="m" style="left:6px;top:0px;color:#000">0012FF8C</div>
<div class="m" style="left:85px;top:0px">767B3C45</div>
<div class="m" style="left:157px;top:0px"><i class="cj">返回到</i> kernel32.767B3C45</div>
<div class="m" style="left:6px;top:16px;color:#e4e4e4">0012FF90</div>
<div class="m" style="left:85px;top:16px">7FFDA000</div>
<div class="m" style="left:6px;top:32px;color:#e4e4e4">0012FF94</div>
<div class="m" style="left:85px;top:32px">0012FFD4</div>
<div class="m" style="left:6px;top:48px;color:#e4e4e4">0012FF98</div>
<div class="m" style="left:85px;top:48px">777E37F5</div>
<div class="m" style="left:157px;top:48px"><i class="cj">返回到</i> ntdll.777E37F5</div>
<div class="m" style="left:6px;top:64px;color:#e4e4e4">0012FF9C</div>
<div class="m" style="left:85px;top:64px">7FFDA000</div>
<div class="m" style="left:6px;top:80px;color:#e4e4e4">0012FFA0</div>
<div class="m" style="left:85px;top:80px">7B8059EB</div>
<div class="m" style="left:6px;top:96px;color:#e4e4e4">0012FFA4</div>
<div class="m" style="left:85px;top:96px">00000000</div>
<div class="m" style="left:6px;top:112px;color:#e4e4e4">0012FFA8</div>
<div class="m" style="left:85px;top:112px">00000000</div>
<div class="m" style="left:6px;top:128px;color:#e4e4e4">0012FFAC</div>
<div class="m" style="left:85px;top:128px">7FFDA000</div>
<div class="m" style="left:6px;top:144px;color:#e4e4e4">0012FFB0</div>
<div class="m" style="left:85px;top:144px">00000000</div>
<div class="m" style="left:6px;top:160px;color:#e4e4e4">0012FFB4</div>
<div class="m" style="left:85px;top:160px">00000000</div>
<div class="m" style="left:6px;top:176px;color:#e4e4e4">0012FFB8</div>
<div class="m" style="left:85px;top:176px">00000000</div>
<div class="m" style="left:6px;top:192px;color:#e4e4e4">0012FFBC</div>
<div class="m" style="left:85px;top:192px">0012FFA0</div>
<div class="m" style="left:6px;top:208px;color:#e4e4e4">0012FFC0</div>
<div class="m" style="left:85px;top:208px">00000000</div>
<div class="m" style="left:6px;top:224px;color:#e4e4e4">0012FFC4</div>
<div class="m" style="left:85px;top:224px">FFFFFFFF</div>
<div class="m" style="left:157px;top:224px">SEH <i class="cj">链尾部</i></div>
<div class="m" style="left:6px;top:240px;color:#e4e4e4">0012FFC8</div>
<div class="m" style="left:85px;top:240px">7779E0ED</div>
<div class="m" style="left:157px;top:240px">SE<i class="cj">处理程序</i></div>
<div class="m" style="left:6px;top:256px;color:#e4e4e4">0012FFCC</div>
<div class="m" style="left:85px;top:256px">0CEFB447</div>
<div class="m" style="left:6px;top:272px;color:#e4e4e4">0012FFD0</div>
<div class="m" style="left:85px;top:272px">00000000</div>
</div>
<div class="vl" style="left:1120px;top:528px;height:278px;width:2px;background:linear-gradient(90deg,#ececec 0,#ececec 1px,#505050 1px,#505050 2px)"></div>
<div class="vl" style="left:1201px;top:528px;height:278px;width:2px;background:linear-gradient(90deg,#ececec 0,#ececec 1px,#505050 1px,#505050 2px)"></div>
<svg class="abs" style="left:1124px;top:560px" width="12" height="246" viewBox="0 0 12 246"><path d="M9 9.500H4.500V246" stroke="#e0e0e0" stroke-width="1.600" fill="none"/></svg>
<div class="sb" style="left:1677px;top:529px;width:17px;height:277px"></div>
<div class="abs" style="left:1681px;top:537px;width:0;height:0;border-left:4px solid transparent;border-right:4px solid transparent;border-bottom:4px solid #505050"></div>
<div class="abs" style="left:1681px;top:796px;width:0;height:0;border-left:4px solid transparent;border-right:4px solid transparent;border-top:4px solid #505050"></div>
<div class="sbb" style="left:1678px;top:770px;width:15px;height:15px"></div>
<div class="abs" style="left:1694px;top:528px;width:6px;height:278px;background:#c0c0c0"></div>
<div class="abs" style="left:0;top:808px;width:1700px;height:21px;background:#f0f0f0"></div>
<div class="abs" style="left:7px;top:814px;font-family:'Liberation Mono','Noto Sans CJK SC',monospace;font-size:12px;letter-spacing:-1.200px;line-height:14px;font-weight:bold;color:#e00000">M1</div>
<div class="abs" style="left:33px;top:814px;font-family:'Liberation Mono','Noto Sans CJK SC',monospace;font-size:12px;letter-spacing:-1.200px;line-height:14px;font-weight:bold;color:#000">M2</div>
<div class="abs" style="left:59px;top:814px;font-family:'Liberation Mono','Noto Sans CJK SC',monospace;font-size:12px;letter-spacing:-1.200px;line-height:14px;font-weight:bold;color:#000">M3</div>
<div class="abs" style="left:85px;top:814px;font-family:'Liberation Mono','Noto Sans CJK SC',monospace;font-size:12px;letter-spacing:-1.200px;line-height:14px;font-weight:bold;color:#000">M4</div>
<div class="abs" style="left:111px;top:814px;font-family:'Liberation Mono','Noto Sans CJK SC',monospace;font-size:12px;letter-spacing:-1.200px;line-height:14px;font-weight:bold;color:#000">M5</div>
<div class="abs" style="left:226px;top:816px;font-family:'Liberation Mono','Noto Sans CJK SC',monospace;font-size:12px;letter-spacing:-1.200px;line-height:14px;color:#000">Command:</div>
<div class="abs" style="left:290px;top:809px;width:198px;height:19px;background:#fff;border:1px solid;border-color:#808080 #fff #fff #808080;box-shadow:inset 1px 1px 0 #404040"></div>
<div class="abs" style="left:470px;top:811px;width:16px;height:15px;background:#f0f0f0;border:1px solid;border-color:#fff #696969 #696969 #fff"><div class="abs" style="left:3px;top:5px;width:0;height:0;border-left:4px solid transparent;border-right:4px solid transparent;border-top:4px solid #000"></div></div>
<div class="abs" style="left:500px;top:809px;width:1077px;height:19px;background:#f0f0f0;border:1px solid;border-color:#808080 #fff #fff #808080"></div>
<div class="abs" style="left:1602px;top:813px;font-family:'Liberation Mono','Noto Sans CJK SC',monospace;font-size:12px;letter-spacing:-1.200px;line-height:14px;color:#e00000">ESP</div>
<div class="abs" style="left:1637px;top:813px;font-family:'Liberation Mono','Noto Sans CJK SC',monospace;font-size:12px;letter-spacing:-1.200px;line-height:14px;color:#000">EBP</div>
<div class="abs" style="left:1671px;top:813px;font-family:'Liberation Mono','Noto Sans CJK SC',monospace;font-size:12px;letter-spacing:-1.200px;line-height:14px;color:#000">NONE</div>
<div class="abs" style="left:0;top:806px;width:1700px;height:2px;background:#c0c0c0"></div>
<div class="abs" style="left:0;top:829px;width:1700px;height:19px;background:#c0c0c0;border-top:1px solid #a0a0a0;border-bottom:1px solid #f8f8f8"></div>
<div class="abs" style="left:0;top:829px;width:2px;height:18px;background:#e8e8e8"></div>
<div class="abs" style="left:2px;top:830px;width:1px;height:17px;background:#808080"></div>
<div class="abs" style="left:1656px;top:831px;width:1px;height:16px;background:#fff"></div><div class="abs" style="left:1658px;top:831px;width:1px;height:16px;background:#808080"></div><div class="abs" style="left:1697px;top:831px;width:1px;height:16px;background:#fff"></div>
<div class="abs" style="left:5px;top:831px;font-family:'Liberation Mono','Noto Sans CJK SC',monospace;font-size:13px;line-height:16px;color:#000;white-space:pre;letter-spacing:-.800px"><span style="letter-spacing:0">断点位于</span> reverseM.0040107B</div>
<div class="abs" style="left:0;top:848px;width:1700px;height:40px;overflow:hidden;background:linear-gradient(90deg,#215f9e 0,#2a74b6 14px,#2f7ec0 50px,#3c8ece 90px,#3a8bcb 125px,#4a9cd8 250px,#5aaee2 440px,#4ca2dc 600px,#3890d0 760px,#2c80c6 900px,#2470bc 1060px,#1e62b0 1200px,#1b54a0 1350px,#1a4b8e 1450px,#194888 1700px)"><div class="abs" style="left:0;top:0;width:1700px;height:40px;background:linear-gradient(180deg,rgba(10,40,90,.35) 0,rgba(255,255,255,.10) 2px,rgba(255,255,255,.03) 50%,rgba(0,0,0,.06) 100%)"></div><div class="abs" style="left:735px;top:4px;width:440px;height:150px;border-radius:50%;border-top:5px solid rgba(150,205,245,.42);border-right:3px solid rgba(150,205,245,.25);transform:rotate(4deg)"></div><div class="abs" style="left:60px;top:-30px;width:30px;height:120px;background:linear-gradient(90deg,rgba(120,190,240,0),rgba(120,190,240,.35),rgba(120,190,240,0));transform:rotate(35deg)"></div></div>
<div class="abs" style="left:8px;top:850px;width:38px;height:38px;border-radius:50%;background:radial-gradient(ellipse 70% 45% at 50% 100%,#7fd4fa 0,rgba(90,180,240,.6) 50%,rgba(60,140,215,0) 100%),radial-gradient(circle at 50% 40%,#3a86cc 0,#2a6cb4 55%,#1b4f92 78%,#143c78 100%);box-shadow:0 0 0 1px rgba(16,44,92,.85),inset 0 0 0 1.500px rgba(150,200,240,.55),inset 0 6px 8px rgba(255,255,255,.25)"></div>
<svg class="abs" style="left:16px;top:855px" width="24" height="27" viewBox="0 0 24 27"><path d="M5.500 3.500Q9 1.200 12.800 3L11.300 12Q8 10.300 3.800 12.600Z" fill="#ee5a28"/><path d="M14 3.600Q18 6 23 3L21 12.600Q17 15.200 12.600 12.800Z" fill="#8ac63c"/><path d="M3.400 14Q7.500 11.600 11 13.400L9.500 23Q6 21 1.600 23.600Z" fill="#3a9ae6"/><path d="M12.300 14.200Q16.500 16.600 20.700 14L19 23.400Q15 26 10.800 23.600Z" fill="#f6c028"/></svg>
<div class="abs" style="left:122px;top:848px;width:59px;height:41px;border:1px solid rgba(24,60,104,.8);border-radius:3px;background:linear-gradient(180deg,rgba(215,238,252,.72),rgba(170,215,245,.5) 45%,rgba(120,185,235,.42) 55%,rgba(120,190,235,.5) 100%);box-shadow:inset 0 0 0 1px rgba(255,255,255,.5)"></div>
<div class="abs" style="left:246px;top:848px;width:59px;height:41px;border:1px solid rgba(24,60,104,.8);border-radius:3px;background:linear-gradient(180deg,rgba(215,238,252,.72),rgba(170,215,245,.5) 45%,rgba(120,185,235,.42) 55%,rgba(120,190,235,.5) 100%);box-shadow:inset 0 0 0 1px rgba(255,255,255,.5)"></div>
<div class="abs" style="left:308px;top:848px;width:59px;height:41px;border:1px solid rgba(24,60,104,.8);border-radius:3px;background:linear-gradient(180deg,rgba(215,238,252,.72),rgba(170,215,245,.5) 45%,rgba(120,185,235,.42) 55%,rgba(120,190,235,.5) 100%);box-shadow:inset 0 0 0 1px rgba(255,255,255,.5)"></div>
<div class="abs" style="left:370px;top:848px;width:59px;height:41px;border:1px solid rgba(24,60,104,.8);border-radius:3px;background:linear-gradient(180deg,rgba(215,238,252,.72),rgba(170,215,245,.5) 45%,rgba(120,185,235,.42) 55%,rgba(120,190,235,.5) 100%);box-shadow:inset 0 0 0 1px rgba(255,255,255,.5)"></div>
<svg class="abs" style="left:66px;top:849px" width="48" height="39" viewBox="0 0 48 39"><ellipse cx="24" cy="18" rx="20" ry="7.500" transform="rotate(-38 24 18)" fill="none" stroke="#e8b828" stroke-width="2.600"/><text x="12.500" y="30" font-family="Liberation Sans, sans-serif" font-weight="bold" font-size="43" fill="#2a7fd8" stroke="#134a96" stroke-width=".700">e</text><path d="M9.500 27.500Q6 31 8.500 32.500Q12 33.500 18 29" fill="none" stroke="#e8b828" stroke-width="2.600"/></svg>
<svg class="abs" style="left:134px;top:853px" width="36" height="32" viewBox="0 0 36 32"><path d="M3 5h10l2 2h16v18H3z" fill="#f4d878" stroke="#c8a040" stroke-width="1"/><path d="M6 9h26v16H6z" fill="#fbeeb0" stroke="#d0b050" stroke-width=".8"/><rect x="8" y="18" width="20" height="12" fill="#70b0e8" stroke="#c8e0f8" stroke-width="1.500"/><rect x="12" y="22" width="12" height="8" fill="#e8f4ff"/><rect x="5" y="3" width="4" height="2" fill="#30a040"/><rect x="14" y="6" width="3" height="2" fill="#d04040"/><rect x="22" y="8" width="3" height="2" fill="#30a040"/></svg>
<div class="abs" style="left:206px;top:857px;width:19px;height:23px;background:#bcdcf4;border:1px solid #9cc8ea"></div>
<div class="abs" style="left:200px;top:858px;width:19px;height:19px;border-radius:50%;background:radial-gradient(circle at 40% 35%,#ffb060,#f07010 70%,#c85000);border:1px solid #fff"></div>
<div class="abs" style="left:207px;top:863px;width:0;height:0;border-top:5px solid transparent;border-bottom:5px solid transparent;border-left:8px solid #fff"></div>
<div class="abs" style="left:259px;top:855px;width:30px;height:25px;background:#000;border:1px solid #888;border-top:3px solid #d0d0d0;color:#fff;font-family:'Liberation Mono',monospace;font-weight:bold;font-size:7px;line-height:12px;padding-left:2px;white-space:pre">C:\_</div>
<svg class="abs" style="left:321px;top:852px" width="32" height="34" viewBox="0 0 32 34"><path d="M2 2h17l6 6v24H2z" fill="#f8f8f8" stroke="#808080" stroke-width="1"/><path d="M2 16h23v16H2z" fill="#80d040"/><path d="M6 12v12M6 12q3-2 3 2v10" stroke="#202020" stroke-width="1.200" fill="none"/><path d="M12 16h4M14 14v4M18 16h4M20 14v4" stroke="#202020" stroke-width="1"/><path d="M29 1l3 3-12 22-4 3 1-5z" fill="#f0b020" stroke="#905010" stroke-width=".8"/><path d="M29 1l3 3-1.500 2.500-3-3z" fill="#e04040"/></svg>
<div class="abs" style="left:383px;top:853px;width:31px;height:31px;background:#e02428;color:#fff;font-family:'Noto Sans CJK SC',sans-serif;font-size:14px;line-height:15px;letter-spacing:1px;padding:1px 0 0 1px;overflow:hidden">破吾<br>解</div>
<div class="abs" style="left:400px;top:870px;width:14px;height:16px;border-radius:2px 2px 7px 7px;background:conic-gradient(#3070d0 0 25%,#f0c020 0 50%,#3070d0 0 75%,#f0c020 0);border:1px solid #e8e8e8"></div>
<div class="abs" style="left:1430px;top:859px;color:#fff;font-family:'Liberation Mono',monospace;font-size:12px;letter-spacing:-1px;line-height:14px">CH</div>
<svg class="abs" style="left:1451px;top:858px" width="17" height="16" viewBox="0 0 17 16"><path d="M4 5l6-3" stroke="#d0d0d0" stroke-width="1"/><rect x="1" y="6" width="14" height="8" rx="1" fill="#e8e8e8" stroke="#707070" stroke-width="1"/><path d="M3 8.500h10M3 11h10" stroke="#606060" stroke-width="1" stroke-dasharray="1.500 1"/></svg>
<div class="abs" style="left:1473px;top:857px;width:17px;height:17px;border-radius:50%;background:radial-gradient(circle at 50% 30%,#5878e8,#1828a8);border:1.500px solid #d8e0f0;color:#fff;font-weight:bold;font-size:12px;line-height:14px;text-align:center">?</div>
<div class="abs" style="left:1500px;top:856px;width:7px;height:6px;border:1px solid #fff;border-top-width:2px"></div><div class="abs" style="left:1498px;top:859px;width:7px;height:5px;border:1px solid #fff;border-top-width:2px;background:#2060a8"></div>
<div class="abs" style="left:1499px;top:870px;width:0;height:0;border-left:3px solid transparent;border-right:3px solid transparent;border-top:3px solid #fff"></div>
<div class="abs" style="left:1517px;top:866px;width:0;height:0;border-left:4px solid transparent;border-right:4px solid transparent;border-bottom:5px solid #fff"></div>
<svg class="abs" style="left:1537px;top:857px" width="18" height="20" viewBox="0 0 18 20"><path d="M2.500 2v16" stroke="#fff" stroke-width="1.500"/><path d="M4 3q4-2 7 0t5 0v7q-3 2-5 0t-7 0z" fill="#fff"/><circle cx="12" cy="14" r="4.500" fill="#e02020" stroke="#fff" stroke-width=".8"/><path d="M10 12l4 4M14 12l-4 4" stroke="#fff" stroke-width="1.400"/></svg>
<svg class="abs" style="left:1561px;top:859px" width="18" height="18" viewBox="0 0 18 18"><rect x="5" y="3" width="11" height="9" fill="#2a5a9a" stroke="#fff" stroke-width="1.400"/><path d="M8 15h6M11 12v3" stroke="#fff" stroke-width="1.400"/><path d="M3 1v7M1 1v3h4V1M3 8v6h3" stroke="#fff" stroke-width="1.200" fill="none"/></svg>
<svg class="abs" style="left:1585px;top:858px" width="19" height="20" viewBox="0 0 19 20"><path d="M2 7h3l4-4v13l-4-4H2z" fill="#fff"/><circle cx="12" cy="14" r="4.500" fill="#e02020" stroke="#fff" stroke-width=".8"/><path d="M10 12l4 4M14 12l-4 4" stroke="#fff" stroke-width="1.400"/></svg>
<div class="abs" style="left:1608px;top:851px;width:78px;text-align:center;color:#fff;font-family:'Liberation Sans',sans-serif;font-size:12.500px;line-height:18px">14:52<br>2020/10/28</div>
<div class="abs" style="left:1686px;top:849px;width:14px;height:39px;border:1px solid rgba(20,40,80,.8);background:linear-gradient(90deg,rgba(255,255,255,.35),rgba(255,255,255,.1));box-shadow:inset 1px 0 0 rgba(255,255,255,.4)"></div>
</body></html>
